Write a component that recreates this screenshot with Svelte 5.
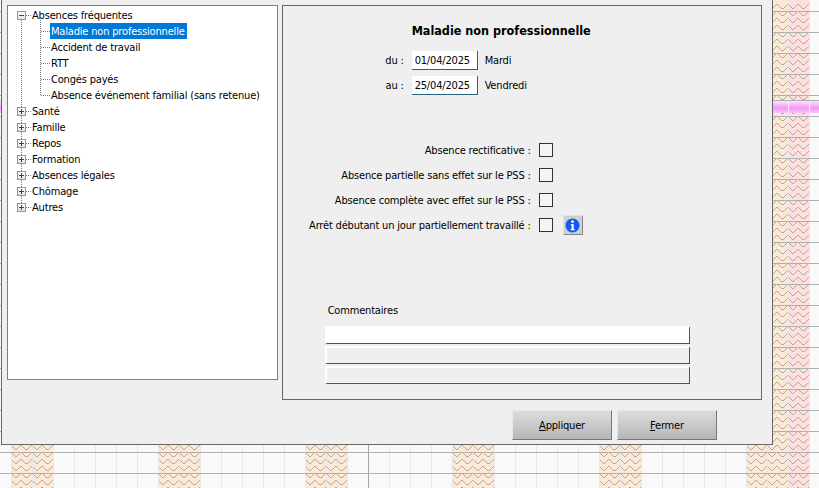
<script>
	const W = 819
	const H = 488
	const CELL = 21
	const ORIGIN = 11

	const hatched = [11, 158, 305, 452, 599, 746, 767]
	const colLines = Array.from({ length: 39 }, (_, i) => ORIGIN + i * CELL)
	const rowLines = Array.from({ length: 23 }, (_, i) => ORIGIN + i * CELL)
	rowLines.push(100)

	// zigzag stairs of the non working days, only where the dialog doesn't cover them
	const STAIR = [0, 1, 2, 3, 4, 4, 3, 2, 1, 0, 0, 1, 2, 3, 4, 4, 4, 3, 2, 1, 0]
	let zig = ''
	for (const col of hatched) {
		for (let x = col; x < col + 42; x++) {
			const dy = STAIR[(x - col) % 21]
			for (let y = 4; y < H; y += 7) {
				if (x < 773 && y < 440) continue
				zig += `M${x} ${y + dy}h1v1h-1z`
			}
		}
	}

	const frequent = [
		'Maladie non professionnelle',
		'Accident de travail',
		'RTT',
		'Congés payés',
		'Absence événement familial (sans retenue)'
	]
	const others = ['Santé', 'Famille', 'Repos', 'Formation', 'Absences légales', 'Chômage', 'Autres']
	const options = [
		'Absence rectificative :',
		'Absence partielle sans effet sur le PSS :',
		'Absence complète avec effet sur le PSS :',
		'Arrêt débutant un jour partiellement travaillé :'
	]
	const dates = [
		{ label: 'du :', value: '01/04/2025', day: 'Mardi' },
		{ label: 'au :', value: '25/04/2025', day: 'Vendredi' }
	]
</script>

<svg class="planning" width={W} height={H} shape-rendering="crispEdges">
	<defs>
		<linearGradient id="band" x1="0" y1="0" x2="0" y2="1">
			<stop offset="0" stop-color="#fbe2fb" />
			<stop offset="0.6" stop-color="#f398f3" />
			<stop offset="1" stop-color="#f8c4f8" />
		</linearGradient>
	</defs>
	<rect width={W} height={H} fill="#f9f9f9" />
	{#each hatched as x}
		<rect {x} y="0" width="21" height={H} fill="#fbe9d6" />
		<rect x={x + 21} y="0" width="21" height={H} fill={x === 767 ? '#fde0de' : '#fbe9d6'} />
	{/each}
	<path d={zig} fill="#b3aca4" />
	{#each colLines as x}
		<rect {x} y="0" width="1" height={H} fill={x === 368 ? '#a6a6a6' : '#e8e8e8'} />
	{/each}
	{#each rowLines as y}
		<rect x="0" {y} width={W} height="1" fill="#b0b0b0" />
	{/each}
	<rect x="0" y="101" width={W} height="12" fill="url(#band)" />
	{#each colLines as x}
		<rect {x} y="101" width="1" height="12" fill="#f6f0f6" />
	{/each}
</svg>

<div class="dialog">
	<div class="main">
		<div class="tree">
			<ul class="roots">
				<li>
					<div class="row">
						<span class="toggle minus"></span><span class="link"></span><span class="name">Absences fréquentes</span>
					</div>
					<ul class="children">
						{#each frequent as item, i}
							<li class="leaf"><span class="name" class:selected={i === 0}>{item}</span></li>
						{/each}
					</ul>
				</li>
				{#each others as item}
					<li>
						<div class="row">
							<span class="toggle"></span><span class="link"></span><span class="name">{item}</span>
						</div>
					</li>
				{/each}
			</ul>
		</div>

		<div class="panel">
			<h1>Maladie non professionnelle</h1>

			<div class="dates">
				{#each dates as d}
					<span class="date-label">{d.label}</span>
					<span class="date-input">{d.value}</span>
					<span class="date-day">{d.day}</span>
				{/each}
			</div>

			<div class="options">
				{#each options as label, i}
					<div class="option">
						<span class="option-label">{label}</span>
						<span class="check"></span>
						{#if i === 3}
							<button class="info" aria-label="Information">
								<svg width="15" height="15" viewBox="0 0 15 15">
									<circle cx="7.5" cy="7.5" r="7" fill="#0f5bf0" />
									<circle cx="7.5" cy="3.7" r="1.4" fill="#fff" />
									<path d="M5.8 6h2.9v5h1v1.2H5.6V11h1V7.2h-.8z" fill="#fff" />
								</svg>
							</button>
						{/if}
					</div>
				{/each}
			</div>

			<div class="comments">
				<div class="comments-title">Commentaires</div>
				<div class="line first"></div>
				<div class="line"></div>
				<div class="line"></div>
			</div>
		</div>
	</div>

	<div class="actions">
		<button class="action"><u>A</u>ppliquer</button>
		<button class="action"><u>F</u>ermer</button>
	</div>
</div>

<style>
	:global(body) {
		margin: 0;
		background: #f9f9f9;
		overflow: hidden;
	}

	.planning {
		position: absolute;
		left: 0;
		top: 0;
		display: block;
	}

	.dialog {
		position: absolute;
		left: 1px;
		top: -1px;
		width: 772px;
		height: 446px;
		box-sizing: border-box;
		border: 1px solid #666;
		background: #efefef;
		padding: 5px 10px 0 5px;
		font-family: 'DejaVu Sans', sans-serif;
		font-stretch: condensed;
		font-size: 11px;
		letter-spacing: -0.18px;
		color: #000;
	}

	.main {
		display: flex;
		align-items: flex-start;
		gap: 4px;
	}

	.tree {
		width: 271px;
		height: 375px;
		box-sizing: border-box;
		border: 1px solid #7a7f88;
		background: #fff;
		padding-top: 1px;
	}

	ul {
		list-style: none;
		margin: 0;
		padding: 0;
	}

	.roots {
		position: relative;
		padding-left: 9px;
	}

	/* vertical dots that tie the top level nodes together */
	.roots::before {
		content: '';
		position: absolute;
		left: 13px;
		top: 8px;
		bottom: 8px;
		border-left: 1px dotted #777;
	}

	.row,
	.leaf {
		height: 16px;
		display: flex;
		align-items: center;
		white-space: nowrap;
	}

	.toggle {
		position: relative;
		z-index: 1;
		width: 9px;
		height: 9px;
		box-sizing: border-box;
		border: 1px solid #8e98a8;
		background: linear-gradient(#fff, #dfe3ea);
	}

	.toggle::before,
	.toggle:not(.minus)::after {
		content: '';
		position: absolute;
		background: #2b4a78;
	}

	.toggle::before {
		left: 1px;
		top: 3px;
		width: 5px;
		height: 1px;
	}

	.toggle:not(.minus)::after {
		left: 3px;
		top: 1px;
		width: 1px;
		height: 5px;
	}

	.link {
		width: 5px;
		border-top: 1px dotted #777;
	}

	.name {
		height: 16px;
		padding: 0 2px 0 1px;
		line-height: 18px;
	}

	.selected {
		background: #0078d7;
		color: #fff;
	}

	.children {
		position: relative;
		margin-left: 23px;
	}

	.children::before {
		content: '';
		position: absolute;
		left: 0;
		top: -5px;
		bottom: 8px;
		border-left: 1px dotted #777;
	}

	.leaf::before {
		content: '';
		flex: none;
		width: 9px;
		margin-left: 1px;
		border-top: 1px dotted #777;
	}

	.panel {
		width: 481px;
		height: 395px;
		box-sizing: border-box;
		border: 1px solid #666;
		padding-top: 15px;
	}

	h1 {
		margin: 0 0 11px;
		padding-left: 129px;
		font-size: 12.5px;
		letter-spacing: 0;
		line-height: 19px;
		font-weight: 700;
	}

	.dates {
		display: grid;
		grid-template-columns: 121px 66px auto;
		grid-auto-rows: 19px;
		row-gap: 6px;
		column-gap: 8px;
		align-items: center;
		line-height: 20px;
	}

	.date-label {
		text-align: right;
	}

	.date-input {
		height: 19px;
		box-sizing: border-box;
		background: #fff;
		border-right: 1px solid #2a6078;
		border-bottom: 1px solid #2a6078;
		padding-left: 3px;
	}

	.date-day {
		margin-left: -1px;
	}

	.options {
		margin-top: 45px;
		display: flex;
		flex-direction: column;
		gap: 5px;
	}

	.option {
		height: 20px;
		display: flex;
		align-items: center;
	}

	.option-label {
		width: 248px;
		text-align: right;
		white-space: nowrap;
	}

	.check {
		width: 14px;
		height: 14px;
		box-sizing: border-box;
		margin-left: 8px;
		border: 1px solid #333;
		background: #f4f4f4;
	}

	.info {
		width: 20px;
		height: 20px;
		padding: 0;
		margin-left: 10px;
		display: flex;
		align-items: center;
		justify-content: center;
		border: 1px solid;
		border-color: #e4e4e4 #888 #888 #e4e4e4;
		background: #cfcfcf;
	}

	.comments {
		margin-top: 66px;
		padding-left: 42px;
	}

	.comments-title {
		height: 25px;
		line-height: 20px;
		padding-left: 3px;
	}

	.line {
		width: 365px;
		height: 18px;
		box-sizing: border-box;
		margin-bottom: 2px;
		border-top: 2px solid #fff;
		border-left: 2px solid #fff;
		border-right: 1px solid #2a6078;
		border-bottom: 1px solid #2a6078;
	}

	.line.first {
		background: #fff;
	}

	.actions {
		display: flex;
		justify-content: flex-end;
		gap: 5px;
		margin-top: 10px;
		padding-right: 45px;
	}

	.action {
		width: 100px;
		height: 30px;
		padding: 0;
		font: inherit;
		letter-spacing: inherit;
		color: #000;
		border: 1px solid;
		border-color: #e6e6e6 #777 #777 #e6e6e6;
		background: linear-gradient(#dcdcdc, #b6b6b6);
	}
</style>
